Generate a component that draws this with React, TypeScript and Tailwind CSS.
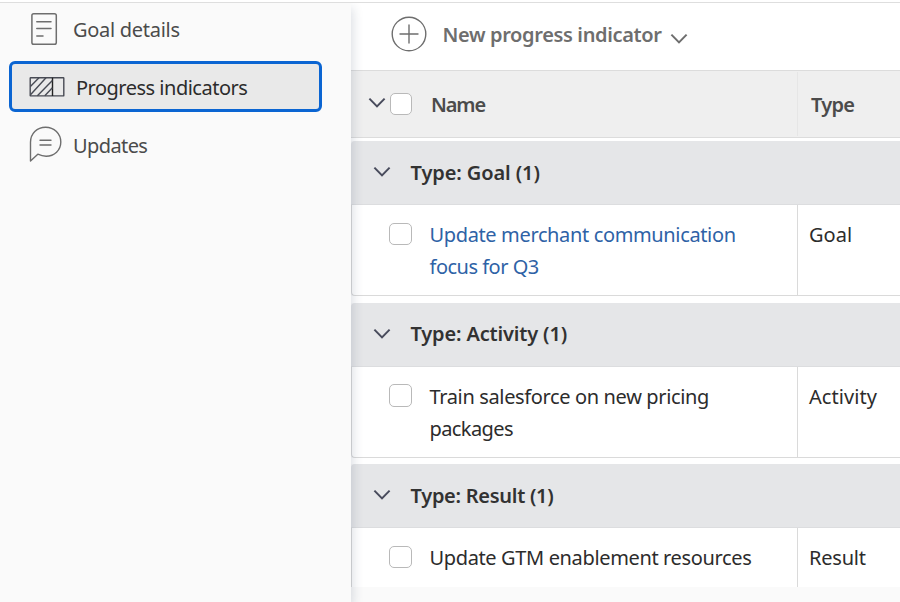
import type { ReactNode } from "react";

function Chevron({ className = "" }: { className?: string }) {
  return (
    <svg viewBox="0 0 18 12" className={`h-3 w-[18px] shrink-0 ${className}`} fill="none" stroke="currentColor" strokeWidth="2" strokeLinecap="butt" strokeLinejoin="miter">
      <path d="M1.4 1.6 L9 9.4 L16.6 1.6" />
    </svg>
  );
}

function Checkbox({ className = "" }: { className?: string }) {
  return <span className={`block shrink-0 rounded-[5px] border border-[#b9b9b9] bg-white ${className}`} />;
}

function DetailsIcon() {
  return (
    <svg viewBox="0 0 36 36" className="h-9 w-9 shrink-0" fill="none" stroke="#6e6e6e" strokeWidth="1.5" strokeLinecap="round">
      <rect x="2.9" y="2.8" width="24.4" height="30.4" rx="1.8" />
      <path d="M7.8 10.7H22M7.8 17.4H22M7.8 25H14" />
    </svg>
  );
}

function ProgressIcon() {
  return (
    <svg viewBox="0 0 36 20" className="h-5 w-9 shrink-0" fill="none" stroke="#484b54" strokeWidth="1.4">
      <rect x="1.2" y="0.7" width="33.6" height="18.2" rx="0.5" />
      <path d="M23.5 0.7V19" strokeWidth="1.4" stroke="#222" />
      <path d="M1.4 9.6L10 0.8M1.5 17.8L17 0.8M8.4 18.8L23.4 3.6M15.8 18.8L23.4 10.8" />
    </svg>
  );
}

function UpdatesIcon() {
  return (
    <svg viewBox="0 0 36 38" className="h-[38px] w-9 shrink-0" fill="none" stroke="#6e6e6e" strokeWidth="1.4" strokeLinejoin="round" strokeLinecap="round">
      <path d="M1.5 36V17.3C1.5 8.8 7.9 2.2 16.6 2.2C25.2 2.2 31.8 8.9 31.8 17C31.8 25.2 25.4 31.2 17.1 31.2C14 31.2 11.4 30.4 8.8 29.2Z" />
      <path d="M11 15.2H22M11 20H22" />
    </svg>
  );
}

function Group({ title, name, type, link, headClass, typeTracking, rowClass, boxClass }: {
  title: string;
  name: ReactNode;
  type: string;
  link?: boolean;
  headClass: string;
  typeTracking: string;
  rowClass: string;
  boxClass: string;
}) {
  return (
    <section>
      <div className="flex h-16 items-center rounded-tl-[4px] border-b border-[#dcdddf] bg-[#e5e6e8] pl-[21.5px]">
        <Chevron className="-mt-0.5 text-[#484b5c]" />
        <h2 className={`ml-5 whitespace-nowrap text-[20px] font-semibold leading-8 text-[#323232] ${headClass}`}>{title}</h2>
      </div>
      <div className={`flex border-l border-[#dadada] bg-white leading-8 text-[#2c2c2c] ${rowClass}`}>
        <div className="flex w-[445px] shrink-0 pl-[37px] pt-[13px]">
          <Checkbox className={boxClass} />
          <p className={`ml-[17.5px] mt-px whitespace-nowrap text-[20px] tracking-[-0.36px] ${link ? "text-[#2e62a6]" : ""}`}>{name}</p>
        </div>
        <div className={`flex-1 border-l border-[#dadada] pl-[11px] pt-[14px] text-[20px] ${typeTracking}`}>{type}</div>
      </div>
    </section>
  );
}

export default function App() {
  return (
    <div className="flex h-[602px] w-[900px] flex-col overflow-hidden bg-white font-['Noto_Sans',sans-serif] text-[20px]">
      <div className="h-[3px] shrink-0 border-b border-[#dedede] bg-white" />
      <div className="flex flex-1">
        <aside className="relative z-10 w-[351px] shrink-0 bg-[#fafafa] text-[#4b4b4b] shadow-[2px_5px_10px_rgba(40,55,85,0.16)] [clip-path:inset(0_-20px_0_0)]">
          <div className="flex h-[58px] items-start pl-[29px] pt-2">
            <DetailsIcon />
            <span className="ml-2 mt-[3px] leading-8 tracking-[-0.28px]">Goal details</span>
          </div>
          <div className="ml-[9px] flex h-[51px] w-[313px] items-center rounded-[6px] border-[3px] border-[#0b65d2] bg-[#e9e9e9] pl-[17px] text-[#2c2c2c]">
            <ProgressIcon />
            <span className="ml-[11px] mt-0.5 leading-8 tracking-[-0.5px]">Progress indicators</span>
          </div>
          <div className="flex items-start pl-[29px] pt-[13px]">
            <UpdatesIcon />
            <span className="ml-2 mt-[5px] leading-8 tracking-[-0.6px]">Updates</span>
          </div>
        </aside>
        <main className="flex min-w-0 flex-1 flex-col bg-white">
          <div className="flex h-[67px] shrink-0 items-start pl-10 pt-[13px] text-[#6e6e6e]">
            <svg viewBox="0 0 36 36" className="h-9 w-9 shrink-0" fill="none" stroke="currentColor" strokeWidth="1.4" strokeLinecap="round">
              <circle cx="18" cy="18" r="16.8" />
              <path d="M9 18H27M18 9V27" />
            </svg>
            <span className="ml-[15.5px] mt-[3px] whitespace-nowrap font-semibold leading-8 tracking-[-0.36px]">New progress indicator</span>
            <Chevron className="ml-2 mt-[17px]" />
          </div>
          <div className="flex h-[68px] shrink-0 border-y border-[#dcdcdc] bg-[#efefef] font-semibold leading-8 text-[#4b4b4b]">
            <div className="flex w-[446px] items-center pl-[17px]">
              <Chevron className="-mt-[3px] text-[#484b5c]" />
              <Checkbox className="ml-1 h-[22px] w-[22px]" />
              <span className="ml-[19px] mt-0.5 tracking-[-1.1px]">Name</span>
            </div>
            <div className="my-px flex flex-1 items-center border-l border-[#e6e6e6] pl-[13px] pt-0.5 tracking-[-0.7px]">Type</div>
          </div>
          <div className="flex h-[3px] shrink-0 bg-white" />
          <div className="flex flex-1 flex-col bg-[#fafafa]">
            <Group title="Type: Goal (1)" name={<>Update merchant communication<br /><span className="tracking-[-0.5px]">focus for Q3</span></>} type="Goal" link headClass="tracking-[-0.1px]" typeTracking="tracking-[0px]" rowClass="h-[91px] rounded-bl-[4px] border-b" boxClass="mt-[5px] h-[22px] w-[23px]" />
            <div className="h-[7px] bg-white" />
            <Group title="Type: Activity (1)" name={<>Train salesforce on new pricing<br /><span className="tracking-[-0.6px]">packages</span></>} type="Activity" headClass="-mt-0.5 tracking-[-0.16px]" typeTracking="tracking-[0.05px]" rowClass="h-[91px] rounded-bl-[4px] border-b" boxClass="mt-[4px] h-[23px] w-[23px]" />
            <div className="h-[6px] bg-white" />
            <Group title="Type: Result (1)" name="Update GTM enablement resources" type="Result" headClass="tracking-[-0.28px]" typeTracking="tracking-[-0.2px]" rowClass="h-[59px]" boxClass="mt-[5px] h-[22px] w-[23px]" />
          </div>
        </main>
      </div>
    </div>
  );
}
